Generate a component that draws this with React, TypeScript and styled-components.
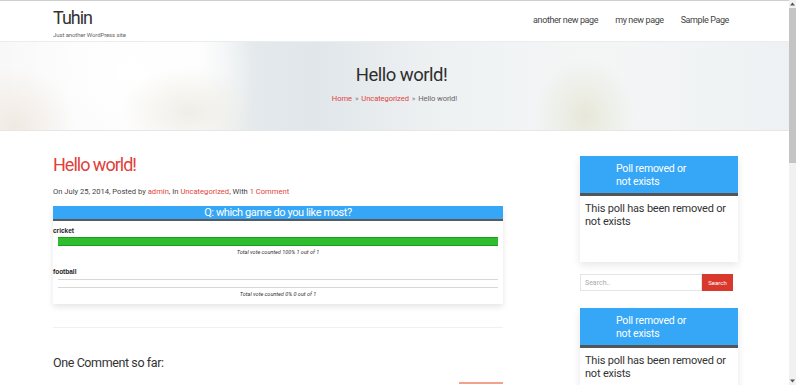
import { FC } from 'react';
import styled, { createGlobalStyle } from 'styled-components';

const GlobalStyle = createGlobalStyle`
  html, body {
    margin: 0;
    padding: 0;
    overflow: hidden;
    background: #fff;
  }
  body {
    font-family: Roboto, "Liberation Sans", sans-serif;
    color: #333;
  }
  * { box-sizing: border-box; }
`;

const navLinks = ['another new page', 'my new page', 'Sample Page'];

const pollOptions = [
  { name: 'cricket', percent: 100, votes: 1 },
  { name: 'football', percent: 0, votes: 0 },
];

const totalVotes = 1;

const PollWidget: FC = () => (
  <Widget>
    <WidgetHead>Poll removed or<br />not exists</WidgetHead>
    <WidgetBody>This poll has been removed or not exists</WidgetBody>
  </Widget>
);

const App: FC = () => {
  return (
    <Page>
      <GlobalStyle />
      <Header>
        <Brand>
          <SiteTitle>Tuhin</SiteTitle>
          <Tagline>Just another WordPress site</Tagline>
        </Brand>
        <Nav>
          {navLinks.map((l) => <NavLink key={l}>{l}</NavLink>)}
        </Nav>
      </Header>

      <Banner>
        <BannerTitle>Hello world!</BannerTitle>
        <Crumbs>
          <RedLink>Home</RedLink><Sep>»</Sep>
          <RedLink>Uncategorized</RedLink><Sep>»</Sep>
          <span>Hello world!</span>
        </Crumbs>
      </Banner>

      <Content>
        <Main>
          <PostTitle>Hello world!</PostTitle>
          <Meta>
            On July 25, 2014, Posted by <RedLink>admin</RedLink>, In <RedLink>Uncategorized</RedLink>, With <RedLink>1 Comment</RedLink>
          </Meta>

          <Poll>
            <PollQuestion>Q: which game do you like most?</PollQuestion>
            {pollOptions.map((o) => (
              <PollOption key={o.name}>
                <OptionName>{o.name}</OptionName>
                <BarTrack $empty={o.percent === 0}>
                  {o.percent > 0 && <BarFill style={{ width: `${o.percent}%` }} />}
                </BarTrack>
                <VoteNote>Total vote counted {o.percent}% {o.votes} out of {totalVotes}</VoteNote>
              </PollOption>
            ))}
          </Poll>

          <Divider />
          <CommentsTitle>One Comment so far:</CommentsTitle>
          <ReplyRow>
            <ReplyButton />
          </ReplyRow>
        </Main>

        <Sidebar>
          <PollWidget />
          <SearchForm>
            <SearchInput placeholder="Search.." />
            <SearchButton>Search</SearchButton>
          </SearchForm>
          <PollWidget />
        </Sidebar>
      </Content>

      <Scrollbar>
        <ScrollArrow viewBox="0 0 7 8"><path d="M1 5.5 L3.5 2.5 L6 5.5 Z" /></ScrollArrow>
        <ScrollThumb />
        <ScrollTrack />
        <ScrollArrow viewBox="0 0 7 8"><path d="M1 2.5 L3.5 5.5 L6 2.5 Z" /></ScrollArrow>
      </Scrollbar>
    </Page>
  );
};

export default App;

const Page = styled.div`
  width: 789px;
  height: 385px;
  border-top: 1px solid #cfcfcf;
  overflow: hidden;
`;

const Header = styled.header`
  height: 41px;
  padding: 0 60px 0 53px;
  display: flex;
  justify-content: space-between;
  align-items: center;
  border-bottom: 1px solid #ececec;
  box-shadow: 0 1px 2px rgba(0, 0, 0, 0.04);
`;

const Brand = styled.div`
  display: flex;
  flex-direction: column;
  padding-top: 2px;
`;

const SiteTitle = styled.div`
  font-size: 18px;
  line-height: 22px;
  color: #333;
  letter-spacing: -1px;
`;

const Tagline = styled.div`
  font-size: 6px;
  color: #666;
  margin-top: 2px;
  letter-spacing: -0.1px;
`;

const Nav = styled.nav`
  display: flex;
  gap: 17px;
  padding-bottom: 2px;
`;

const NavLink = styled.a`
  font-size: 9px;
  color: #444;
  letter-spacing: -0.4px;
`;

const Banner = styled.section`
  height: 89px;
  border-bottom: 1px solid #e6e6e6;
  display: flex;
  flex-direction: column;
  align-items: center;
  padding-top: 22px;
  background:
    radial-gradient(ellipse 70px 45px at 190px 70px, rgba(238, 236, 228, 0.9), rgba(255,255,255,0)),
    radial-gradient(ellipse 60px 60px at 15px 85px, rgba(240, 232, 224, 0.9), rgba(255,255,255,0)),
    radial-gradient(ellipse 50px 60px at 585px 75px, rgba(230, 230, 214, 0.9), rgba(255,255,255,0)),
    radial-gradient(ellipse 130px 120px at 130px 30px, #ffffff, rgba(255,255,255,0)),
    linear-gradient(90deg, #f8f8f8 0%, #fdfdfd 25%, #e4e9ec 32%, #e0e6ea 40%, #eef1f2 55%, #f4f6f6 75%, #eef1f3 100%);
`;

const BannerTitle = styled.h1`
  margin: 0;
  padding-left: 14px;
  font-size: 18.5px;
  font-weight: 400;
  line-height: 22px;
  color: #2e2e2e;
  letter-spacing: -0.5px;
`;

const Crumbs = styled.div`
  margin-top: 8px;
  font-size: 7.6px;
  color: #666;
  display: flex;
  align-items: center;
  letter-spacing: -0.1px;
`;

const Sep = styled.span`
  margin: 0 3px;
  color: #888;
`;

const RedLink = styled.a`
  color: #e0443c;
`;

const Content = styled.div`
  display: flex;
  padding: 22px 0 0 53px;
`;

const Main = styled.main`
  width: 450px;
`;

const PostTitle = styled.h2`
  margin: 0;
  font-size: 18px;
  line-height: 24px;
  font-weight: 400;
  color: #e0403a;
  letter-spacing: -1px;
`;

const Meta = styled.div`
  margin-top: 10px;
  font-size: 7.6px;
  color: #444;
`;

const Poll = styled.div`
  margin-top: 10px;
  background: #fff;
  box-shadow: 0 3px 6px rgba(0, 0, 0, 0.1);
  padding-bottom: 7px;
`;

const PollQuestion = styled.div`
  background: #36a6f7;
  color: #fff;
  text-align: center;
  font-size: 11px;
  line-height: 13px;
  letter-spacing: -0.4px;
  border-bottom: 2px solid #5a5a5a;
`;

const PollOption = styled.div`
  padding-top: 6px;
  & + & { padding-top: 13px; }
`;

const OptionName = styled.div`
  font-size: 6.5px;
  font-weight: 700;
  color: #222;
  font-family: "Liberation Sans", Arial, sans-serif;
`;

const BarTrack = styled.div<{ $empty: boolean }>`
  margin: ${(p) => (p.$empty ? '4px 5px 0' : '3px 5px 0')};
  height: 9px;
  border-top: 1px solid ${(p) => (p.$empty ? '#d8d8d8' : '#1a9e1a')};
  border-bottom: 1px solid ${(p) => (p.$empty ? '#d8d8d8' : '#1a9e1a')};
`;

const BarFill = styled.div`
  height: 100%;
  background: #2fbd2f;
`;

const VoteNote = styled.div`
  margin-top: 3px;
  text-align: center;
  font-size: 5.5px;
  font-style: italic;
  color: #333;
`;

const Divider = styled.hr`
  margin: 23px 0 0;
  border: 0;
  border-top: 1px solid #f0f0f0;
`;

const CommentsTitle = styled.h3`
  margin: 27px 0 0;
  font-size: 12.5px;
  font-weight: 400;
  color: #333;
  letter-spacing: -0.4px;
`;

const ReplyRow = styled.div`
  display: flex;
  justify-content: flex-end;
  margin-top: 12px;
`;

const ReplyButton = styled.div`
  width: 44px;
  height: 10px;
  border-top: 2px solid #f3a08c;
`;

const Sidebar = styled.aside`
  width: 158px;
  margin-left: 77px;
  padding-top: 3px;
  display: flex;
  flex-direction: column;
`;

const Widget = styled.div`
  background: #fff;
  box-shadow: 0 3px 8px rgba(0, 0, 0, 0.1);
  height: 106px;
`;

const WidgetHead = styled.div`
  background: #36a6f7;
  color: #fff;
  height: 40px;
  padding: 6px 0 0 36px;
  font-size: 10.5px;
  line-height: 13px;
  letter-spacing: -0.2px;
  border-bottom: 3px solid #555;
`;

const WidgetBody = styled.div`
  padding: 6px 12px 0 5px;
  font-size: 11px;
  line-height: 13px;
  color: #333;
  letter-spacing: -0.2px;
`;

const SearchForm = styled.form`
  display: flex;
  margin: 12px 0 17px;
  height: 17px;
`;

const SearchInput = styled.input`
  width: 122px;
  height: 17px;
  border: 1px solid #e4e4e4;
  padding: 0 4px;
  font-family: Roboto, sans-serif;
  font-size: 7px;
  color: #999;
  outline: none;
  &::placeholder { color: #aaa; }
`;

const SearchButton = styled.button`
  width: 31px;
  height: 17px;
  border: 0;
  background: #d9382d;
  color: #fff;
  font-family: Roboto, sans-serif;
  font-size: 6px;
  padding: 0;
`;

const Scrollbar = styled.div`
  position: fixed;
  top: 0;
  right: 0;
  width: 7px;
  height: 385px;
  background: #f1f1f1;
  display: flex;
  flex-direction: column;
`;

const ScrollArrow = styled.svg`
  width: 7px;
  height: 8px;
  fill: #555;
  flex: none;
`;

const ScrollThumb = styled.div`
  width: 7px;
  height: 155px;
  background: #c4c4c4;
`;

const ScrollTrack = styled.div`
  flex: 1;
`;
